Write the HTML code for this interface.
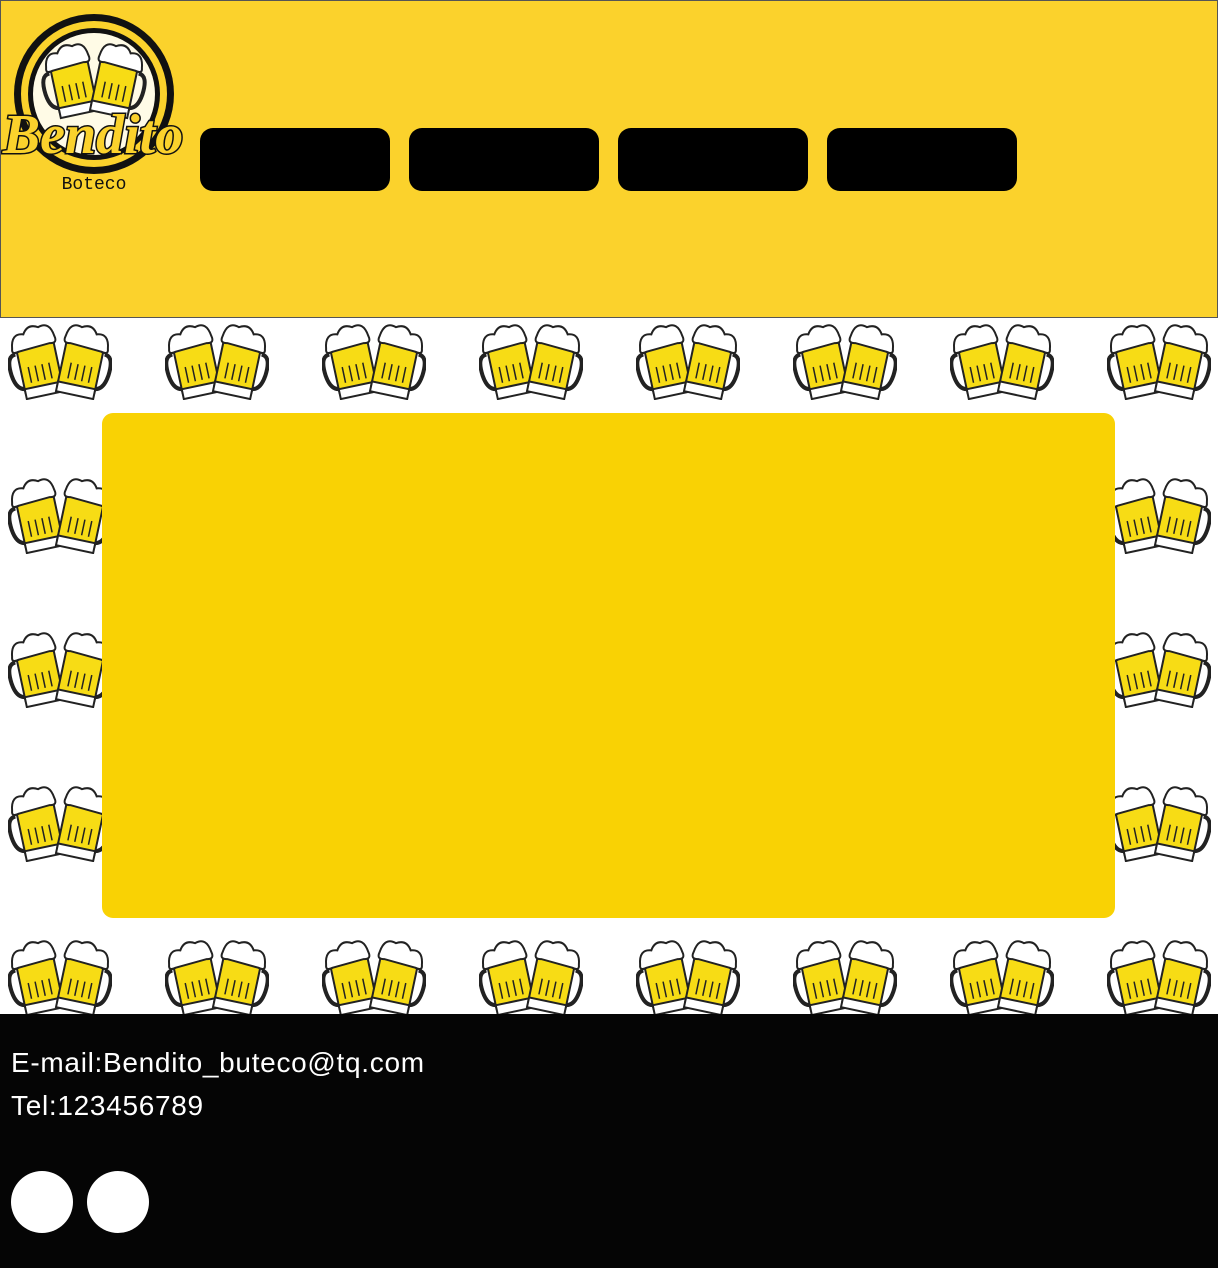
<!DOCTYPE html>
<html><head><meta charset="utf-8"><style>
*{margin:0;padding:0;box-sizing:border-box}
body{width:1218px;height:1268px;position:relative;background:#fff;overflow:hidden;font-family:"Liberation Sans",sans-serif}
.hdr{position:absolute;left:0;top:0;width:1218px;height:318px;background:#fbd22c;border:1px solid #555}
.btn{position:absolute;top:127px;width:190px;height:63px;background:#000;border-radius:13px}
.main{position:absolute;left:102px;top:413px;width:1013px;height:505px;background:#f9d204;border-radius:11px}
.ftr{position:absolute;left:0;top:1014px;width:1218px;height:254px;background:#050505;color:#fff}
.ftr p{position:absolute;left:11px;font-size:28px;letter-spacing:0.7px}
.c{position:absolute;top:157px;width:62px;height:62px;border-radius:50%;background:#fff}
.m{position:absolute;width:104px;height:80px}
</style></head><body>
<svg width="0" height="0" style="position:absolute">
<defs>
<g id="mug">
<g transform="rotate(-12 30 45)">
<path d="M10 30 Q0 30 2 50 Q4 66 14 66" fill="none" stroke="#222" stroke-width="4"/>
<rect x="12" y="22" width="38" height="52" rx="4" fill="#f7dc15" stroke="#222" stroke-width="2"/>
<rect x="12" y="66" width="38" height="10" fill="#fff" stroke="#222" stroke-width="2"/>
<path d="M8 24 Q10 8 22 12 Q28 2 38 8 Q50 4 52 20 Q54 28 46 26 L14 28 Q6 30 8 24Z" fill="#fff" stroke="#222" stroke-width="2"/>
<path d="M20 45v16M27 45v16M34 45v16M41 45v16" stroke="#222" stroke-width="1.5"/>
</g>
<g transform="translate(104 0) scale(-1 1) rotate(-12 30 45)">
<path d="M10 30 Q0 30 2 50 Q4 66 14 66" fill="none" stroke="#222" stroke-width="4"/>
<rect x="12" y="22" width="38" height="52" rx="4" fill="#f7dc15" stroke="#222" stroke-width="2"/>
<rect x="12" y="66" width="38" height="10" fill="#fff" stroke="#222" stroke-width="2"/>
<path d="M8 24 Q10 8 22 12 Q28 2 38 8 Q50 4 52 20 Q54 28 46 26 L14 28 Q6 30 8 24Z" fill="#fff" stroke="#222" stroke-width="2"/>
<path d="M20 45v16M27 45v16M34 45v16M41 45v16" stroke="#222" stroke-width="1.5"/>
</g>
</g>
</defs></svg>
<svg class="m" style="left:8px;top:320px" viewBox="0 0 104 80"><use href="#mug"/></svg>
<svg class="m" style="left:165px;top:320px" viewBox="0 0 104 80"><use href="#mug"/></svg>
<svg class="m" style="left:322px;top:320px" viewBox="0 0 104 80"><use href="#mug"/></svg>
<svg class="m" style="left:479px;top:320px" viewBox="0 0 104 80"><use href="#mug"/></svg>
<svg class="m" style="left:636px;top:320px" viewBox="0 0 104 80"><use href="#mug"/></svg>
<svg class="m" style="left:793px;top:320px" viewBox="0 0 104 80"><use href="#mug"/></svg>
<svg class="m" style="left:950px;top:320px" viewBox="0 0 104 80"><use href="#mug"/></svg>
<svg class="m" style="left:1107px;top:320px" viewBox="0 0 104 80"><use href="#mug"/></svg>
<svg class="m" style="left:8px;top:474px" viewBox="0 0 104 80"><use href="#mug"/></svg>
<svg class="m" style="left:1107px;top:474px" viewBox="0 0 104 80"><use href="#mug"/></svg>
<svg class="m" style="left:8px;top:628px" viewBox="0 0 104 80"><use href="#mug"/></svg>
<svg class="m" style="left:1107px;top:628px" viewBox="0 0 104 80"><use href="#mug"/></svg>
<svg class="m" style="left:8px;top:782px" viewBox="0 0 104 80"><use href="#mug"/></svg>
<svg class="m" style="left:1107px;top:782px" viewBox="0 0 104 80"><use href="#mug"/></svg>
<svg class="m" style="left:8px;top:936px" viewBox="0 0 104 80"><use href="#mug"/></svg>
<svg class="m" style="left:165px;top:936px" viewBox="0 0 104 80"><use href="#mug"/></svg>
<svg class="m" style="left:322px;top:936px" viewBox="0 0 104 80"><use href="#mug"/></svg>
<svg class="m" style="left:479px;top:936px" viewBox="0 0 104 80"><use href="#mug"/></svg>
<svg class="m" style="left:636px;top:936px" viewBox="0 0 104 80"><use href="#mug"/></svg>
<svg class="m" style="left:793px;top:936px" viewBox="0 0 104 80"><use href="#mug"/></svg>
<svg class="m" style="left:950px;top:936px" viewBox="0 0 104 80"><use href="#mug"/></svg>
<svg class="m" style="left:1107px;top:936px" viewBox="0 0 104 80"><use href="#mug"/></svg>

<div class="hdr">
<svg style="position:absolute;left:0;top:0" width="190" height="195" viewBox="0 0 190 195">
<circle cx="93" cy="93" r="80" fill="#111"/>
<circle cx="93" cy="93" r="73" fill="#fbd22c"/>
<circle cx="93" cy="93" r="66" fill="#111"/>
<circle cx="93" cy="93" r="61" fill="#fffbe6"/>
<g transform="translate(41 38)"><use href="#mug"/></g>
<text x="92" y="152" text-anchor="middle" font-family="Liberation Serif,serif" font-style="italic" font-weight="bold" font-size="56" fill="#fbd22c" stroke="#111" stroke-width="3" paint-order="stroke">Bendito</text>
<text x="93" y="188" text-anchor="middle" font-family="Liberation Mono,monospace" font-size="18" fill="#111">Boteco</text>
</svg>
<div class="btn" style="left:199px"></div>
<div class="btn" style="left:408px"></div>
<div class="btn" style="left:617px"></div>
<div class="btn" style="left:826px"></div>
</div>
<div class="main"></div>
<div class="ftr">
<p style="top:33px">E-mail:Bendito_buteco@tq.com</p>
<p style="top:76px">Tel:123456789</p>
<div class="c" style="left:11px"></div>
<div class="c" style="left:87px"></div>
</div>
</body></html>
